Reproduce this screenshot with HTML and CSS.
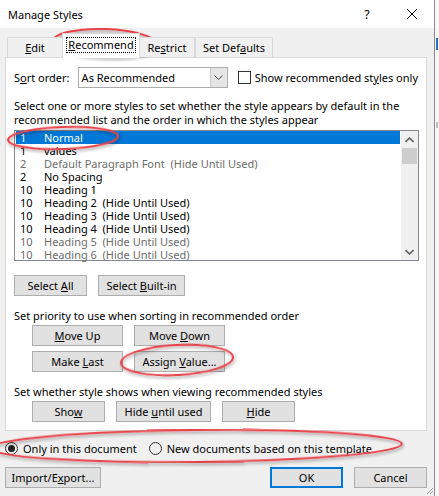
FILE: index.html
```html
<!DOCTYPE html>
<html>
<head>
<meta charset="utf-8">
<link rel="stylesheet" href="styles.css">
</head>
<body>
<div class="screen">
  <div class="dialog">
    <div class="titlebar">
      <span class="title">Manage Styles</span>
      <span class="help">?</span>
      <span class="close"><svg width="12" height="12" viewBox="0 0 12 12"><path d="M1 1 L11 11 M11 1 L1 11" stroke="#000" stroke-width="1" fill="none"/></svg></span>
    </div>
    <div class="body">
      <div class="tabs">
        <div class="tab tab-edit"><u>E</u>dit</div>
        <div class="tab tab-sel"><span class="focus"><u>R</u>ecommend</span></div>
        <div class="tab tab-restrict">Re<u>s</u>trict</div>
        <div class="tab tab-defaults">Set Def<u>a</u>ults</div>
      </div>
      <div class="panel">
        <div class="sort-row">
          <span class="sort-label">S<u>o</u>rt order:</span>
          <div class="select">
            <span class="select-text">As Recommended</span>
            <span class="select-btn"><svg width="9" height="6" viewBox="0 0 9 6"><path d="M0.5 0.5 L4.5 4.5 L8.5 0.5" stroke="#444" stroke-width="1" fill="none"/></svg></span>
          </div>
          <span class="checkbox"></span>
          <span class="check-label">Show recommended st<u>y</u>les only</span>
        </div>
        <p class="desc">Select one or more styles to set whether the style appears by default in the recommended list and the order in which the styles appear</p>
        <div class="list">
          <div class="rows">
            <div class="row sel"><span class="num">1</span><span>Normal</span></div>
            <div class="row"><span class="num">1</span><span>values</span></div>
            <div class="row dim"><span class="num">2</span><span>Default Paragraph Font&nbsp; (Hide Until Used)</span></div>
            <div class="row"><span class="num">2</span><span>No Spacing</span></div>
            <div class="row"><span class="num">10</span><span>Heading 1</span></div>
            <div class="row"><span class="num">10</span><span>Heading 2&nbsp; (Hide Until Used)</span></div>
            <div class="row"><span class="num">10</span><span>Heading 3&nbsp; (Hide Until Used)</span></div>
            <div class="row"><span class="num">10</span><span>Heading 4&nbsp; (Hide Until Used)</span></div>
            <div class="row dim"><span class="num">10</span><span>Heading 5&nbsp; (Hide Until Used)</span></div>
            <div class="row dim"><span class="num">10</span><span>Heading 6&nbsp; (Hide Until Used)</span></div>
          </div>
          <div class="scrollbar">
            <span class="arrow"><svg width="9" height="6" viewBox="0 0 9 6"><path d="M0.5 5 L4.5 1 L8.5 5" stroke="#606060" stroke-width="1.6" fill="none"/></svg></span>
            <span class="thumb"></span>
            <span class="track"></span>
            <span class="arrow"><svg width="9" height="6" viewBox="0 0 9 6"><path d="M0.5 1 L4.5 5 L8.5 1" stroke="#606060" stroke-width="1.6" fill="none"/></svg></span>
          </div>
        </div>
        <div class="btn-row first">
          <button class="btn w73">Select <u>A</u>ll</button>
          <button class="btn w87">Select <u>B</u>uilt-in</button>
        </div>
        <p class="label">Set priority to use when sorting in recommended order</p>
        <div class="btn-grid">
          <button class="btn w91"><u>M</u>ove Up</button>
          <button class="btn w91">Move <u>D</u>own</button>
          <button class="btn w91">Make <u>L</u>ast</button>
          <button class="btn w91">Assign <u>V</u>alue...</button>
        </div>
        <p class="label">Set whether style shows when viewing recommended styles</p>
        <div class="btn-row indent">
          <button class="btn w73">Sho<u>w</u></button>
          <button class="btn w95">Hide <u>u</u>ntil used</button>
          <button class="btn w73"><u>H</u>ide</button>
        </div>
      </div>
      <div class="radios">
        <span class="radio on"></span><span class="radio-label">Only in this document</span>
        <span class="radio"></span><span class="radio-label">New documents based on this template</span>
      </div>
      <div class="footer">
        <button class="btn w96">Import/E<u>x</u>port...</button>
        <span class="spacer"></span>
        <button class="btn w73 default">OK</button>
        <button class="btn w73">Cancel</button>
      </div>
      <svg class="grip" width="8" height="8" viewBox="0 0 8 8"><path d="M7 1 L1 7 M7 4 L4 7" stroke="#a0a0a0" stroke-width="1" fill="none"/></svg>
    </div>
  </div>
  <div class="behind">
    <span class="mark m1"></span>
    <span class="mark m2"></span>
  </div>
  <svg class="annot" width="439" height="496" viewBox="0 0 439 496">
    <defs>
      <filter id="sh" x="-20%" y="-50%" width="140%" height="200%">
        <feDropShadow dx="1" dy="2" stdDeviation="1.5" flood-color="#000" flood-opacity="0.35"/>
      </filter>
    </defs>
    <g fill="none" stroke="#e8434a" stroke-width="2" filter="url(#sh)">
      <ellipse cx="105" cy="43" rx="52" ry="14" transform="rotate(2 105 43)"/>
      <ellipse cx="63" cy="138" rx="55" ry="11" transform="rotate(-2 63 138)"/>
      <ellipse cx="177" cy="360" rx="56" ry="15" transform="rotate(-3 177 360)"/>
      <ellipse cx="196" cy="446" rx="206" ry="16" transform="rotate(-0.6 196 446)"/>
    </g>
  </svg>
</div>
</body>
</html>
```
FILE: styles.css
```css
* { box-sizing: border-box; }
html, body { margin: 0; padding: 0; }
body {
  width: 439px;
  height: 496px;
  overflow: hidden;
  font-family: "Noto Sans", "Open Sans", sans-serif;
  font-size: 11px;
  color: #000;
  background: #f4f4f4;
}
.screen {
  position: relative;
  display: flex;
  width: 439px;
  height: 496px;
}
.dialog {
  width: 435px;
  height: 496px;
  border-right: 1px solid #8a8a8a;
  display: flex;
  flex-direction: column;
  background: #f0f0f0;
}
.behind {
  flex: 1;
  background: #f7f7f7;
  position: relative;
}
.titlebar {
  height: 28px;
  background: #fff;
  display: flex;
  align-items: center;
  padding-left: 8px;
  font-size: 11px;
}
.title { flex: 1; }
.help { width: 30px; margin-right: 20px; text-align: center; font-size: 12.5px; }
.close { width: 20px; margin-right: 12px; display: flex; justify-content: center; }
.body {
  flex: 1;
  padding: 0 7px 0 5px;
  position: relative;
}
.tabs {
  display: flex;
  align-items: flex-end;
  height: 29px;
  padding-left: 2px;
  position: relative;
  z-index: 2;
  white-space: nowrap;
}
.tab {
  height: 20px;
  border: 1px solid #d9d9d9;
  border-bottom: none;
  background: #f0f0f0;
  display: flex;
  align-items: center;
  justify-content: center;
}
.tab-edit { width: 55px; border-right: none; }
.tab-sel {
  width: 78px;
  height: 25px;
  background: #fff;
  margin-bottom: -1px;
  padding-bottom: 2px;
}
.focus {
  border: 1px dotted #000;
  padding: 0 1px;
  line-height: 14px;
}
.tab-restrict { width: 55px; border-left: none; }
.tab-defaults { width: 78px; border-left: 1px solid #d9d9d9; }
.panel {
  background: #fff;
  border: 1px solid #d9d9d9;
  height: 374px;
  padding: 9px 8px 0 8px;
}
.sort-row {
  display: flex;
  align-items: center;
  height: 21px;
  white-space: nowrap;
}
.sort-label { width: 64px; }
.select {
  width: 151px;
  height: 21px;
  border: 1px solid #adadad;
  display: flex;
  align-items: center;
}
.select-text { flex: 1; padding-left: 3px; }
.select-btn {
  width: 17px;
  height: 19px;
  background: #e5e5e5;
  border-left: 1px solid #c8c8c8;
  display: flex;
  align-items: center;
  justify-content: center;
}
.checkbox {
  width: 13px;
  height: 13px;
  border: 1px solid #333;
  margin-left: 10px;
  margin-right: 4px;
}
.desc {
  margin: 11px 0 0 0;
  line-height: 14px;
}
.list {
  margin-top: 3px;
  width: 405px;
  height: 131px;
  border: 1px solid #828790;
  display: flex;
}
.rows { flex: 1; padding: 0 1px; }
.row {
  height: 13px;
  line-height: 13px;
  display: flex;
  white-space: nowrap;
}
.row .num { width: 28px; padding-left: 4px; }
.row.sel { background: #0078d7; color: #fff; }
.row.dim { color: #6d6d6d; }
.scrollbar {
  width: 17px;
  background: #f0f0f0;
  display: flex;
  flex-direction: column;
}
.arrow {
  height: 17px;
  display: flex;
  align-items: center;
  justify-content: center;
}
.thumb {
  height: 16px;
  margin: 0 1px;
  background: #cdcdcd;
}
.track { flex: 1; }
.btn {
  font-family: inherit;
  font-size: 11px;
  color: #000;
  height: 21px;
  background: #e1e1e1;
  border: 1px solid #adadad;
  padding: 0;
  margin: 0;
  white-space: nowrap;
}
.w73 { width: 73px; }
.w87 { width: 87px; }
.w91 { width: 91px; }
.w95 { width: 95px; }
.w96 { width: 96px; }
.btn-row { display: flex; gap: 11px; }
.btn-row.first { margin-top: 14px; }
.btn-row.indent { margin-left: 18px; margin-top: 2px; }
.label { margin: 13px 0 0 0; line-height: 14px; white-space: nowrap; }
.btn-grid {
  display: grid;
  grid-template-columns: 91px 91px;
  column-gap: 11px;
  row-gap: 5px;
  margin: 2px 0 0 18px;
}
.radios {
  display: flex;
  align-items: center;
  height: 34px;
  white-space: nowrap;
}
.radio {
  width: 13px;
  height: 13px;
  border: 1px solid #333;
  border-radius: 50%;
  display: inline-flex;
  align-items: center;
  justify-content: center;
  margin-right: 5px;
}
.radio.on::after {
  content: "";
  width: 7px;
  height: 7px;
  border-radius: 50%;
  background: #222;
}
.radio-label { margin-right: 12px; }
.footer {
  display: flex;
  gap: 11px;
  margin-top: 2px;
}
.spacer { flex: 1; }
.btn.default { border: 2px solid #0078d7; }
.grip { position: absolute; right: 0; bottom: 1px; }
.mark { position: absolute; background: #2b6cc4; width: 2px; }
.m1 { top: 38px; left: 1px; height: 12px; }
.m2 { top: 122px; left: 1px; height: 6px; background: #c0c0c0; }
.annot {
  position: absolute;
  left: 0;
  top: 0;
  pointer-events: none;
}
```
